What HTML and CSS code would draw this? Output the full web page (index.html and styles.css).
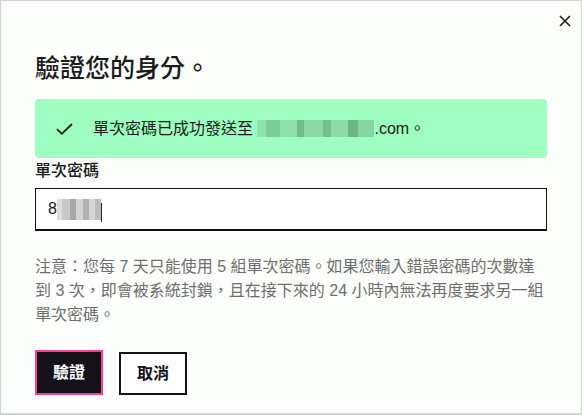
FILE: index.html
```html
<!DOCTYPE html>
<html lang="zh-Hant">
<head>
<meta charset="utf-8">
<title>驗證您的身分</title>
<link rel="stylesheet" href="styles.css">
</head>
<body>
<div class="dialog">
  <div class="header">
    <button class="close" aria-label="關閉">
      <svg width="12" height="12" viewBox="0 0 12 12"><path d="M1 1L11 11M11 1L1 11" stroke="#1b1b1b" stroke-width="1.6" fill="none"/></svg>
    </button>
  </div>
  <h1 class="title">驗證您的身分。</h1>
  <div class="alert">
    <svg class="check" width="17" height="12" viewBox="0 0 17 12"><path d="M1 6.2L5.8 10.8L16 1" stroke="#1b1b1b" stroke-width="1.8" fill="none"/></svg>
    <span class="alert-text">單次密碼已成功發送至 <span class="blur-email"></span>.com。</span>
  </div>
  <label class="label">單次密碼</label>
  <div class="input">
    <span class="digit">8</span><span class="blur-code"></span><span class="caret"></span>
  </div>
  <p class="note">注意：您每 7 天只能使用 5 組單次密碼。如果您輸入錯誤密碼的次數達到 3 次，即會被系統封鎖，且在接下來的 24 小時內無法再度要求另一組<span class="nowrap">單次密碼。</span></p>
  <div class="actions">
    <button class="btn btn-primary">驗證</button>
    <button class="btn btn-secondary">取消</button>
  </div>
</div>
</body>
</html>
```

FILE: styles.css
```css
* { box-sizing: border-box; }
html, body { margin: 0; padding: 0; background: #fcfefc; }
body {
  font-family: "Liberation Sans", "Noto Sans CJK TC", sans-serif;
  color: #1b1b1b;
}
.dialog {
  width: 582px;
  height: 415px;
  border: 1px solid #d3d3d3;
  border-bottom-width: 2px;
  background: #fcfefc;
  padding: 0 34px;
  display: flex;
  flex-direction: column;
}
.header {
  display: flex;
  justify-content: flex-end;
  margin: 10px -28px 0 0;
}
.close {
  width: 20px;
  height: 20px;
  padding: 0;
  border: 0;
  background: transparent;
  display: flex;
  align-items: center;
  justify-content: center;
}
.title {
  margin: 22px 0 16px;
  font-size: 25px;
  line-height: 30px;
  font-weight: 500;
}
.alert {
  height: 59px;
  background: #9efdc0;
  border-radius: 4px;
  display: flex;
  align-items: center;
  padding: 0 20px 0 21px;
  gap: 20px;
  font-size: 16px;
  line-height: 24px;
}
.check { flex: none; }
.blur-email {
  display: inline-block;
  width: 117px;
  height: 17px;
  vertical-align: -3px;
  background:
    linear-gradient(90deg, #8fe4ad 0 8%, #7ccc98 8% 20%, #8bdfa9 20% 34%, #6fb98a 34% 40%, #88d9a5 40% 56%, #72bf8e 56% 63%, #8cdca8 63% 78%, #6db487 78% 86%, #86d6a2 86% 100%);
}
.label {
  margin-top: 1px;
  font-size: 16px;
  line-height: 24px;
  font-weight: 500;
}
.input {
  margin-top: 5px;
  height: 43px;
  border: 1px solid #111;
  border-bottom-width: 2px;
  background: #fff;
  display: flex;
  align-items: center;
  padding-left: 12px;
  font-size: 16px;
}
.digit { line-height: 20px; }
.blur-code {
  width: 44px;
  height: 21px;
  background:
    linear-gradient(90deg, #dcdcdc 0 12%, #c9c9c9 12% 30%, #a8a8a8 30% 44%, #d4d4d4 44% 60%, #b0b0b0 60% 72%, #d6d6d6 72% 86%, #bcbcbc 86% 100%);
}
.caret {
  width: 1px;
  height: 19px;
  background: #222;
  margin-top: 6px;
}
.note {
  margin: 24px 0 0;
  font-size: 16px;
  line-height: 24px;
  color: #6e6e6e;
}
.nowrap { white-space: nowrap; }
.actions {
  margin-top: 23px;
  display: flex;
  align-items: flex-end;
  gap: 16px;
}
.btn {
  width: 68px;
  padding: 0;
  font-family: "Liberation Sans", "Noto Sans CJK TC", sans-serif;
  font-size: 16px;
  font-weight: 700;
  line-height: 24px;
}
.btn-primary {
  height: 45px;
  background: #141218;
  color: #fff;
  border: 2px solid #ff3a98;
}
.btn-secondary {
  height: 43px;
  background: #fff;
  color: #141218;
  border: 2px solid #141218;
}
```
